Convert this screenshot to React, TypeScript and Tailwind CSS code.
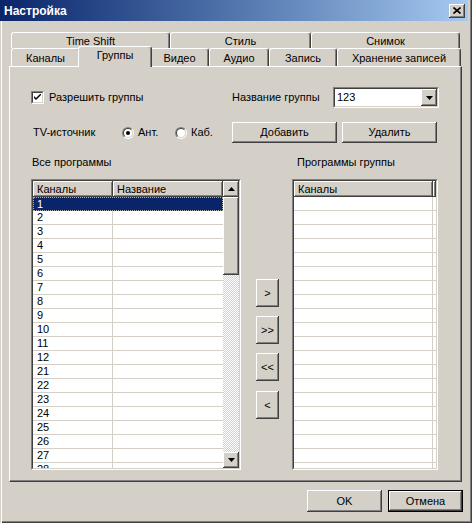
import React from 'react';

const raised =
  'bg-[#d4d0c8] shadow-[inset_-1px_-1px_0_#404040,inset_1px_1px_0_#ffffff,inset_-2px_-2px_0_#808080,inset_2px_2px_0_#d4d0c8]';
const sunkenOuter = 'border border-t-[#808080] border-l-[#808080] border-r-white border-b-white';
const sunkenInner = 'border border-t-[#404040] border-l-[#404040] border-r-[#d4d0c8] border-b-[#d4d0c8]';

const allChannels = ['1', '2', '3', '4', '5', '6', '7', '8', '9', '10', '11', '12', '21', '22', '23', '24', '25', '26', '27', '28'];

function Tab({ label, width, selected }: { label: string; width: string; selected?: boolean }) {
  if (selected) {
    return (
      <div
        className={`relative z-10 -mx-[2px] -mb-[1px] flex h-[21px] ${width} items-start justify-center rounded-t-[3px] border-t border-l border-r border-t-white border-l-white border-r-[#404040] bg-[#d4d0c8] pt-[3px] shadow-[inset_-1px_0_0_#808080]`}
      >
        {label}
      </div>
    );
  }
  return (
    <div
      className={`flex h-full ${width} items-center justify-center rounded-t-[3px] border-t border-l border-r border-t-white border-l-white border-r-[#404040] bg-[#d4d0c8] pt-[1px] shadow-[inset_-1px_0_0_#808080]`}
    >
      {label}
    </div>
  );
}

function WinButton({ children, className = '', isDefault }: { children: React.ReactNode; className?: string; isDefault?: boolean }) {
  return (
    <div className={`flex items-center justify-center ${isDefault ? 'border border-black' : ''} ${className}`}>
      <div className={`flex h-full w-full items-center justify-center ${raised}`}>{children}</div>
    </div>
  );
}

function Arrow({ dir }: { dir: 'up' | 'down' }) {
  return (
    <svg width="7" height="4" viewBox="0 0 7 4">
      {dir === 'up' ? <path d="M3.5 0 L7 4 L0 4 Z" fill="#000" /> : <path d="M0 0 L7 0 L3.5 4 Z" fill="#000" />}
    </svg>
  );
}

function Radio({ checked, label }: { checked?: boolean; label: string }) {
  return (
    <div className="flex items-center gap-[4px]">
      <div className="flex h-[12px] w-[12px] items-center justify-center rounded-full border border-t-[#808080] border-l-[#808080] border-r-white border-b-white">
        <div className="flex h-[10px] w-[10px] items-center justify-center rounded-full border border-t-[#404040] border-l-[#404040] border-r-[#d4d0c8] border-b-[#d4d0c8] bg-white">
          {checked && <div className="h-[4px] w-[4px] rounded-full bg-black" />}
        </div>
      </div>
      <span>{label}</span>
    </div>
  );
}

export default function App() {
  return (
    <div className="relative flex h-[523px] w-[472px] flex-col bg-[#d4d0c8] font-['Liberation_Sans',sans-serif] text-[11px] leading-none text-black shadow-[inset_1px_0_0_#d4d0c8,inset_2px_0_0_#ffffff,inset_-1px_-1px_0_#404040,inset_-2px_-2px_0_#808080]">
      {/* title bar */}
      <div className="flex h-[21px] w-[468px] items-center justify-between bg-gradient-to-r from-[#0a246a] to-[#a6caf0] pl-[4px] pr-[3px]">
        <span className="text-[12px] font-bold text-white">Настройка</span>
        <div className={`flex h-[14px] w-[16px] items-center justify-center ${raised}`}>
          <svg width="8" height="7" viewBox="0 0 8 7">
            <path d="M0.5 0.5 L7.5 6.5 M7.5 0.5 L0.5 6.5" stroke="#000" strokeWidth="1.6" />
          </svg>
        </div>
      </div>

      {/* tabs */}
      <div className="ml-[11px] mt-[11px] flex h-[16px]">
        <Tab label="Time Shift" width="w-[159px]" />
        <Tab label="Стиль" width="w-[141px]" />
        <Tab label="Снимок" width="w-[149px]" />
      </div>
      <div className="ml-[11px] flex h-[18px] items-end">
        <Tab label="Каналы" width="w-[69px]" />
        <Tab label="Группы" width="w-[74px]" selected />
        <Tab label="Видео" width="w-[59px]" />
        <Tab label="Аудио" width="w-[60px]" />
        <Tab label="Запись" width="w-[68px]" />
        <Tab label="Хранение записей" width="w-[124px]" />
      </div>

      {/* panel */}
      <div className="ml-[9px] flex h-[416px] w-[453px] flex-col border-t border-l border-r border-b border-t-white border-l-white border-r-[#404040] border-b-[#404040] shadow-[inset_-1px_-1px_0_#808080]">
        <div className="ml-[21px] mt-[20px] flex h-[21px] items-center">
          <div className="flex w-[201px] items-center gap-[5px]">
            <div className={`flex h-[13px] w-[13px] ${sunkenOuter}`}>
              <div className={`flex h-full w-full items-center justify-center bg-white ${sunkenInner}`}>
                <svg width="7" height="7" viewBox="0 0 7 7">
                  <path d="M0 2 L0 4 L2 6 L7 1 L7 -1 L2 4 Z" fill="#000" />
                </svg>
              </div>
            </div>
            <span>Разрешить группы</span>
          </div>
          <span className="w-[101px]">Название группы</span>
          <div className={`flex h-[21px] w-[106px] ${sunkenOuter}`}>
            <div className={`flex h-full w-full items-center bg-white ${sunkenInner}`}>
              <span className="flex-1 pl-[2px]">123</span>
              <div className={`flex h-[17px] w-[16px] items-center justify-center ${raised}`}>
                <Arrow dir="down" />
              </div>
            </div>
          </div>
        </div>

        <div className="ml-[23px] mt-[14px] flex h-[21px] items-center">
          <span className="w-[89px]">TV-источник</span>
          <div className="w-[53px]">
            <Radio checked label="Ант." />
          </div>
          <div className="w-[57px]">
            <Radio label="Каб." />
          </div>
          <WinButton className="h-[21px] w-[105px]">Добавить</WinButton>
          <WinButton className="ml-[5px] h-[21px] w-[95px]">Удалить</WinButton>
        </div>

        <div className="ml-[22px] mt-[12px] flex h-[14px] items-center">
          <span className="w-[265px]">Все программы</span>
          <span>Программы группы</span>
        </div>

        <div className="ml-[21px] mt-[10px] flex h-[291px]">
          {/* all programs list */}
          <div className={`flex h-full w-[210px] ${sunkenOuter}`}>
            <div className={`flex h-full w-full overflow-hidden bg-white ${sunkenInner}`}>
              <div className="flex flex-1 flex-col overflow-hidden">
                <div className="flex h-[16px] shrink-0">
                  <div className={`flex w-[80px] items-center pl-[4px] ${raised}`}>Каналы</div>
                  <div className={`flex flex-1 items-center pl-[4px] ${raised}`}>Название</div>
                </div>
                {allChannels.map((ch, i) =>
                  i === 0 ? (
                    <div
                      key={ch}
                      className="flex h-[14px] shrink-0 bg-[#0a246a] text-white outline-1 -outline-offset-1 outline-dotted outline-[#b0b0b0]"
                    >
                      <div className="flex w-[80px] items-center pl-[4px]">{ch}</div>
                      <div className="flex-1" />
                    </div>
                  ) : (
                    <div key={ch} className="flex h-[14px] shrink-0 border-b border-[#d4d0c8]">
                      <div className="flex w-[80px] items-center border-r border-[#d4d0c8] pl-[4px]">{ch}</div>
                      <div className="flex-1" />
                    </div>
                  ),
                )}
              </div>
              <div className="flex w-[16px] flex-col bg-[image:repeating-conic-gradient(#d4d0c8_0_25%,#ffffff_0_50%)] bg-[length:2px_2px]">
                <div className={`flex h-[16px] items-center justify-center ${raised}`}>
                  <Arrow dir="up" />
                </div>
                <div className={`h-[78px] ${raised}`} />
                <div className="flex-1" />
                <div className={`flex h-[16px] items-center justify-center ${raised}`}>
                  <Arrow dir="down" />
                </div>
              </div>
            </div>
          </div>

          {/* move buttons */}
          <div className="ml-[15px] flex w-[23px] flex-col pt-[100px]">
            <WinButton className="h-[28px]">&gt;</WinButton>
            <WinButton className="mt-[9px] h-[28px]">&gt;&gt;</WinButton>
            <WinButton className="mt-[9px] h-[28px]">&lt;&lt;</WinButton>
            <WinButton className="mt-[10px] h-[28px]">&lt;</WinButton>
          </div>

          {/* group programs list */}
          <div className={`ml-[13px] flex h-full w-[146px] ${sunkenOuter}`}>
            <div className={`flex h-full w-full flex-col overflow-hidden bg-white ${sunkenInner}`}>
              <div className="flex h-[16px] shrink-0">
                <div className={`flex w-[139px] items-center pl-[4px] ${raised}`}>Каналы</div>
                <div className={`flex-1 ${raised}`} />
              </div>
              {allChannels.map((ch) => (
                <div key={ch} className="flex h-[14px] shrink-0 border-b border-[#d4d0c8]">
                  <div className="w-[139px] border-r border-[#d4d0c8]" />
                </div>
              ))}
            </div>
          </div>
        </div>
      </div>

      {/* footer */}
      <div className="mt-[8px] flex justify-end gap-[6px] pr-[9px]">
        <WinButton className="h-[22px] w-[75px]">OK</WinButton>
        <WinButton className="h-[22px] w-[75px]" isDefault>
          Отмена
        </WinButton>
      </div>
    </div>
  );
}
